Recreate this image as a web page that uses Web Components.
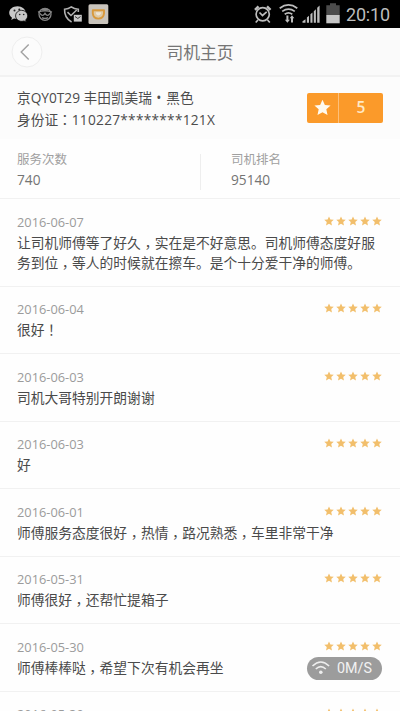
<!DOCTYPE html>
<html lang="zh-CN">
<head>
<meta charset="utf-8">
<title>司机主页</title>
<style>
html,body{margin:0;height:711px;overflow:hidden;background:#fefefe}
body{font-family:"Open Sans","Noto Sans CJK SC",sans-serif}
</style>
</head>
<body>
<driver-page></driver-page>
<script>
const define = (name, html, setup) => customElements.define(name, class extends HTMLElement {
  connectedCallback() {
    if (this.shadowRoot) return;
    const t = document.createElement('template');
    t.innerHTML = html;
    this.attachShadow({mode:'open'}).append(t.content.cloneNode(true));
    if (setup) setup(this, this.shadowRoot);
  }
});
const STAR = 'M10 .8 12.8 7 19.5 7.7 14.5 12.2 15.9 18.9 10 15.5 4.1 18.9 5.5 12.2.5 7.7 7.2 7Z';

define('status-bar', `<style>
:host{display:flex;align-items:center;height:27.5px;background:#000;box-sizing:border-box;padding:0 10px 0 8px;justify-content:space-between}
svg{display:block}
.r{display:flex;align-items:center}
.time{font:18px/27px Roboto,sans-serif;color:#bdbdbd;width:44px;white-space:nowrap;letter-spacing:-.2px;padding-top:1px}
</style>
<svg width="102" height="27" viewBox="8 0 102 27">
<g fill="#c8c8c8"><path d="M17.5 6.2c-4.600 0-8.300 2.900-8.300 6.500 0 2 1.100 3.800 2.800 5l-.8 2.300 2.800-1.400c1 .3 2.300.5 3.500.5 4.600 0 8.200-2.900 8.200-6.400s-3.600-6.500-8.200-6.500z"/><path d="M21.700 10.300c-3.400 0-6.100 2.500-6.100 5.500s2.700 5.500 6.100 5.500c.8 0 1.600-.1 2.300-.4l2.300 1.200-.6-2.200c1.200-1 2-2.500 2-4.100 0-3-2.700-5.500-6-5.500z" stroke="#000" stroke-width=".8"/></g>
<g fill="#222"><circle cx="14.500" cy="10.500" r="1"/><circle cx="19.300" cy="9.600" r="1"/><circle cx="19.700" cy="14.500" r=".8"/><circle cx="23.700" cy="14.500" r=".8"/></g>
<g fill="none" stroke="#858585" stroke-width="1.300"><circle cx="45" cy="14.300" r="6"/><path d="M38 12.200q7-2.600 14 0M40 13.300q2.500 4 5 0 2.500 4 5 0M42 17.600q3 1.700 6 0M42 9.500h6"/></g>
<g fill="none" stroke="#b0b0b0" stroke-width="1.600"><path d="M78.300 12V9.200Q74 9 71.300 6.900 68.500 9 64.600 9.200q-.5 8.500 7 12.800"/><path d="M67.500 12.200l3.500 3.300 5.700-5.500"/></g>
<path d="M73.800 14.800h8v6.800h-8z" fill="#c8c8c8"/><path d="m75 16.500 2.800 2 2.700-2" fill="none" stroke="#333"/>
<rect x="88.500" y="4.200" width="19.800" height="19.800" rx="1.500" fill="#c9c4bc"/><path d="M92.800 10.200h11.200v3.200q-.5 5.200-5.700 5.200-5 0-5.500-5.200z" fill="#dfcaa5" stroke="#d8993c" stroke-width="1.900" stroke-linejoin="round"/><path d="M96 12.200h4.800v1.300q-.6 2-2.400 2t-2.400-2z" fill="#eee5d6"/>
</svg>
<div class="r"><svg width="93" height="27" viewBox="253 0 93 27">
<g fill="none" stroke="#bdbdbd" stroke-width="1.700"><circle cx="262.700" cy="14.300" r="6.600"/><path d="m259.500 12.500 3 3 4.200-3.600M258 20l-2.300 2.500M267.500 20l2.300 2.500"/><path d="m255 9.800 3.500-3.500M270.500 9.800 267 6.300" stroke-width="2.400"/></g>
<g fill="none" stroke="#bdbdbd" stroke-width="1.700"><path d="M279.700 8.200q8.800-6.500 17.600 0M282.200 11.400q6.300-4.600 12.600 0M284.700 14.300q3.800-2.700 7.600 0"/></g>
<path d="M286.400 15.500h2v4.200h1.500l-2.500 3-2.500-3h1.500zM291 22.500h2v-4.200h1.300l-2.300-3-2.300 3h1.300z" fill="#bdbdbd"/>
<path d="M302.500 22.700v-1.500l3-1.900v3.400zM306.900 22.700v-5.200l2.100-1.700v6.900zM310.400 22.700v-8.400l2.100-1.700v10.100zM313.800 22.700V11.200l2.100-2v13.500zM317.200 22.700V7.800l2.400-2.200v17.100z" fill="#bdbdbd"/>
<path d="M326.300 5.200h3.700V3.300h6v1.900h3.700v10h-13.400z" fill="#4c4c4c"/><path d="M326.300 15h13.400v8.300h-13.400z" fill="#c6c6c6"/>
</svg><span class="time">20:10</span></div>`);

define('page-header', `<style>
:host{display:grid;grid-template-columns:60px 1fr 60px;align-items:center;height:49.500px;box-sizing:border-box;background:#fafafa;border-bottom:2px solid #f2f2f2}
svg{display:block;margin:1px 0 0 11px}
h1{margin:4px 0 0;text-align:center;font-size:16.800px;line-height:24px;font-weight:400;color:#757575}
</style><svg width="32" height="32" viewBox="0 0 32 32" fill="none"><circle cx="16" cy="16" r="15" fill="#fcfcfc" stroke="#eee"/><path d="m17.700 8.600-7.500 7.500 7.500 7.500" stroke="#a2a2a2" stroke-width="1.400"/></svg><h1><slot></slot></h1>`);

define('rating-badge', `<style>
:host{display:flex;width:76px;height:30px;border-radius:2px;overflow:hidden;background:#fb9a2a}
.s{width:32px;display:grid;place-items:center;border-right:1px solid #fdc07a;box-sizing:border-box}
.n{flex:1;text-align:center;color:#ffe9c6;font-size:15.500px;line-height:28px;font-weight:600}
</style><div class="s"><svg width="17" height="17" viewBox="0 0 20 20"><path d="${STAR}" fill="#fffaf0"/></svg></div><div class="n"><slot></slot></div>`);

define('driver-info', `<style>
:host{display:flex;justify-content:space-between;height:62px;box-sizing:border-box;padding:9.500px 17px 0;background:#fcfcfc;color:#4c4c4c;font-size:13.700px;line-height:22px}
.t{white-space:nowrap}
.c{font-family:"Noto Sans CJK TC",sans-serif;line-height:1}
.id{letter-spacing:.26px}
.dot{padding:0 1.400px 0 .6px}
p{margin:0}
rating-badge{margin-top:6px}
</style><div class="t"><p>京QY0T29 丰田凯美瑞<span class="dot"> • </span>黑色</p><p>身份证<span class="c" lang="zh-TW">：</span><span class="id">110227********121X</span></p></div><rating-badge>5</rating-badge>`);

define('driver-stats', `<style>
:host{display:grid;grid-template-columns:200px 1fr;height:60px;box-sizing:border-box;border-bottom:1px solid #f1f1f1}
div{padding:10.500px 0 0 17px}
div+div{padding-left:30px;border-left:1px solid #eee;margin-top:15px;margin-bottom:9px;padding-top:0}
div+div span:first-child{margin-top:-4.500px}
span{display:block}
.l{font-size:12.500px;line-height:20px;color:#a0a0a0}
.v{font-size:13.700px;line-height:20px;color:#747474}
</style><div><span class="l">服务次数</span><span class="v">740</span></div><div><span class="l">司机排名</span><span class="v">95140</span></div>`);

define('star-row', `<style>
:host{display:flex;gap:2px}
svg{display:block}
</style>`, (h, r) => {
  const t = document.createElement('template');
  t.innerHTML = `<svg width="10" height="10" viewBox="0 0 20 20"><path d="${STAR}" fill="#f2bf6c"/></svg>`.repeat(5);
  r.append(t.content);
});

define('review-item', `<style>
:host{display:block;box-sizing:border-box;border-bottom:1px solid #f1f1f1;padding:14.500px 18px 12.600px 17px}
.h{display:flex;justify-content:space-between;height:19px}
time{font-size:12.800px;line-height:16px;color:#9b9b9b}
star-row{margin-top:2px}
.b{font-size:13.780px;line-height:20.400px;color:#4a4a4a;white-space:pre}
.p{font-family:"Noto Sans CJK TC",sans-serif;line-height:1}
.low{position:relative;top:4px}
</style><div class="h"><time></time><star-row></star-row></div><div class="b"></div>`, (h, r) => {
  r.querySelector('time').textContent = h.getAttribute('date');
  const b = r.querySelector('.b');
  for (const part of h.getAttribute('text').split(/([，！])/)) {
    if (/^[，！]$/.test(part)) {
      const s = document.createElement('span');
      s.className = part === '，' ? 'p low' : 'p';
      s.lang = 'zh-TW'; s.textContent = part; b.append(s);
    } else b.append(part);
  }
});

define('speed-pill', `<style>
:host{display:flex;align-items:center;gap:6px;position:absolute;left:307px;top:657px;width:75px;height:22.500px;box-sizing:border-box;padding-left:4px;border-radius:12px;background:#9c9c9c;color:#f2f2f2;font:14.300px/22px Roboto,sans-serif}
</style><svg width="20" height="16" viewBox="0 0 20 16" fill="none" stroke="#eee" stroke-width="1.600"><path d="M1.500 6Q9.800-2 18.100 6M4.800 9q5-4.700 10 0"/><circle cx="9.800" cy="12.300" r="1.800" fill="#eee" stroke="none"/></svg><span><slot></slot></span>`);

const reviews = [
 ['2016-06-07','让司机师傅等了好久，实在是不好意思。司机师傅态度好服\n务到位，等人的时候就在擦车。是个十分爱干净的师傅。'],
 ['2016-06-04','很好！'],['2016-06-03','司机大哥特别开朗谢谢'],['2016-06-03','好'],
 ['2016-06-01','师傅服务态度很好，热情，路况熟悉，车里非常干净'],
 ['2016-05-31','师傅很好，还帮忙提箱子'],['2016-05-30','师傅棒棒哒，希望下次有机会再坐'],['2016-05-30','']
];
define('driver-page', `<style>
:host{display:block;position:relative;width:400px;height:711px;overflow:hidden;background:#fefefe}
</style><status-bar></status-bar><page-header>司机主页</page-header><driver-info></driver-info><driver-stats></driver-stats>
${reviews.map(([d,t]) => `<review-item date="${d}" text="${t}"></review-item>`).join('')}
<speed-pill>0M/S</speed-pill>`);
</script>
</body>
</html>
